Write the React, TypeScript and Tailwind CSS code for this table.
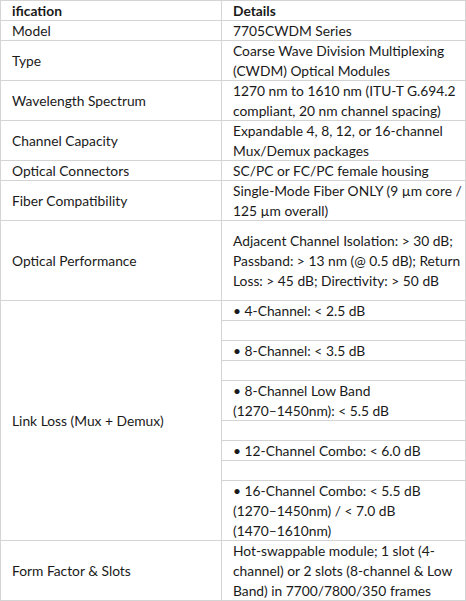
import React from "react";

const font = { fontFamily: "Lato, 'Open Sans', sans-serif" };

function Lines({ lines }: { lines: string[] }) {
  return (
    <div className="whitespace-nowrap">
      {lines.map((l, i) => (
        <div key={i}>{l}</div>
      ))}
    </div>
  );
}

type Row = { label: string; h: string; right: string[]; bold?: boolean };

const rows: Row[] = [
  { label: "ification", h: "h-[20px]", right: ["Details"], bold: true },
  { label: "Model", h: "h-[20px]", right: ["7705CWDM Series"] },
  { label: "Type", h: "h-[40px]", right: ["Coarse Wave Division Multiplexing", "(CWDM) Optical Modules"] },
  { label: "Wavelength Spectrum", h: "h-[40px]", right: ["1270 nm to 1610 nm (ITU-T G.694.2", "compliant, 20 nm channel spacing)"] },
  { label: "Channel Capacity", h: "h-[40px]", right: ["Expandable 4, 8, 12, or 16-channel", "Mux/Demux packages"] },
  { label: "Optical Connectors", h: "h-[20px]", right: ["SC/PC or FC/PC female housing"] },
  { label: "Fiber Compatibility", h: "h-[40px]", right: ["Single-Mode Fiber ONLY (9 \u00b5m core /", "125 \u00b5m overall)"] },
  { label: "Optical Performance", h: "h-[80px]", right: ["Adjacent Channel Isolation: > 30 dB;", "Passband: > 13 nm (@ 0.5 dB); Return", "Loss: > 45 dB; Directivity: > 50 dB"] },
];

const sub: { h: string; lines: string[] }[] = [
  { h: "h-[20px]", lines: ["\u2022 4-Channel: < 2.5 dB"] },
  { h: "h-[20px]", lines: [] },
  { h: "h-[20px]", lines: ["\u2022 8-Channel: < 3.5 dB"] },
  { h: "h-[20px]", lines: [] },
  { h: "h-[40px]", lines: ["\u2022 8-Channel Low Band", "(1270\u20131450nm): < 5.5 dB"] },
  { h: "h-[20px]", lines: [] },
  { h: "h-[20px]", lines: ["\u2022 12-Channel Combo: < 6.0 dB"] },
  { h: "h-[20px]", lines: [] },
  { h: "h-[60px]", lines: ["\u2022 16-Channel Combo: < 5.5 dB", "(1270\u20131450nm) / < 7.0 dB", "(1470\u20131610nm)"] },
];

export default function App() {
  return (
    <div
      className="w-[466px] h-[601px] bg-white text-[13.8px] leading-[20px] text-[#1a1a1a] border border-[#d4d4d4] flex flex-col overflow-hidden"
      style={font}
    >
      {rows.map((r, i) => (
        <div key={i} className={`${r.h} flex border-b border-[#d4d4d4] shrink-0`}>
          <div className={`w-[221px] shrink-0 border-r border-[#d4d4d4] pl-[11px] flex items-center ${r.bold ? "font-bold" : ""}`}>
            {r.label}
          </div>
          <div className={`flex-1 pl-[11px] flex items-center ${r.bold ? "font-bold" : ""}`}>
            <Lines lines={r.right} />
          </div>
        </div>
      ))}
      <div className="h-[240px] flex border-b border-[#d4d4d4] shrink-0">
        <div className="w-[221px] shrink-0 border-r border-[#d4d4d4] pl-[11px] flex items-center">
          Link Loss (Mux + Demux)
        </div>
        <div className="flex-1 flex flex-col">
          {sub.map((s, i) => (
            <div
              key={i}
              className={`${s.h} shrink-0 pl-[11px] flex items-center ${i < sub.length - 1 ? "border-b border-[#d4d4d4]" : ""}`}
            >
              <Lines lines={s.lines} />
            </div>
          ))}
        </div>
      </div>
      <div className="h-[59px] flex shrink-0">
        <div className="w-[221px] shrink-0 border-r border-[#d4d4d4] pl-[11px] flex items-center">
          Form Factor &amp; Slots
        </div>
        <div className="flex-1 pl-[11px] flex items-center">
          <Lines lines={["Hot-swappable module; 1 slot (4-", "channel) or 2 slots (8-channel & Low", "Band) in 7700/7800/350 frames"]} />
        </div>
      </div>
    </div>
  );
}
